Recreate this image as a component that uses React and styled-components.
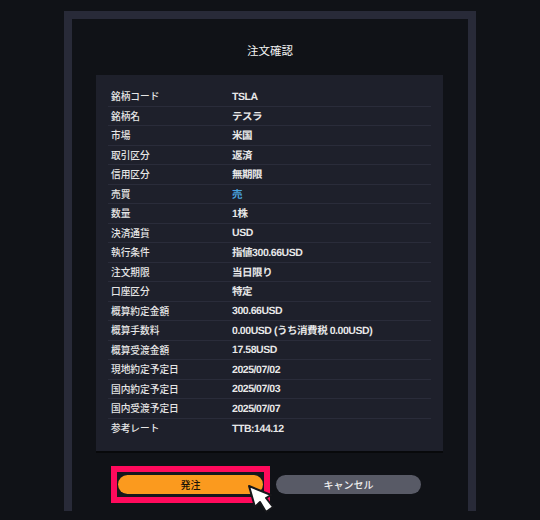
import styled, { createGlobalStyle } from "styled-components"

const rows = [
  ["銘柄コード", "TSLA"],
  ["銘柄名", "テスラ"],
  ["市場", "米国"],
  ["取引区分", "返済"],
  ["信用区分", "無期限"],
  ["売買", "売", true],
  ["数量", "1株"],
  ["決済通貨", "USD"],
  ["執行条件", "指値300.66USD"],
  ["注文期限", "当日限り"],
  ["口座区分", "特定"],
  ["概算約定金額", "300.66USD"],
  ["概算手数料", "0.00USD (うち消費税 0.00USD)"],
  ["概算受渡金額", "17.58USD"],
  ["現地約定予定日", "2025/07/02"],
  ["国内約定予定日", "2025/07/03"],
  ["国内受渡予定日", "2025/07/07"],
  ["参考レート", "TTB:144.12"],
]

const App = () => {
  return (
    <Page>
      <GlobalStyle />
      <Frame>
        <Title>注文確認</Title>
        <Card>
          {rows.map(([label, value, sell], i) => (
            <Row key={label} $last={i === rows.length - 1}>
              <Label>{label}</Label>
              <Value $sell={sell}>{value}</Value>
            </Row>
          ))}
        </Card>
        <Buttons>
          <Highlight>
            <OrderButton>発注</OrderButton>
          </Highlight>
          <CancelButton>キャンセル</CancelButton>
          <Cursor viewBox="0 0 30 32" aria-hidden="true">
            <path
              d="M2 2 L8 23 L13 18 L19 28 L26 23 L19 14 L24 11 Z"
              fill="#fff"
              stroke="#16171b"
              strokeWidth="2"
              strokeLinejoin="round"
            />
          </Cursor>
        </Buttons>
      </Frame>
    </Page>
  )
}

export default App

const GlobalStyle = createGlobalStyle`
  html, body {
    margin: 0;
    padding: 0;
    background: #101217;
  }
`

const Page = styled.div`
  width: 540px;
  height: 520px;
  overflow: hidden;
  padding-top: 11px;
  box-sizing: border-box;
  font-family: "Liberation Sans", "Noto Sans CJK JP", sans-serif;
`

const Frame = styled.div`
  width: 412px;
  height: 500px;
  margin-left: 64px;
  box-sizing: border-box;
  border: 8px solid #282a38;
  border-bottom: none;
  background: #101217;
  padding-top: 25px;
`

const Title = styled.h1`
  margin: 0 0 17px;
  font-size: 11.5px;
  line-height: 14px;
  font-weight: 400;
  text-align: center;
  color: #f2f2f2;
`

const Card = styled.div`
  width: 347px;
  margin-left: 24px;
  box-sizing: border-box;
  padding: 12px 12px 13px;
  background: #1e202b;
  box-shadow: 0 2px 0 #08090b;
`

const Row = styled.div`
  display: flex;
  align-items: center;
  height: 19.5px;
  box-sizing: border-box;
  border-bottom: ${(p) => (p.$last ? "none" : "1px solid #2a2c3a")};
`

const Label = styled.div`
  width: 124px;
  padding-left: 3px;
  box-sizing: border-box;
  font-size: 9.7px;
  font-weight: 500;
  color: #e6e6e6;
`

const Value = styled.div`
  padding-top: 1px;
  font-size: 10.5px;
  letter-spacing: -0.45px;
  font-weight: 700;
  text-rendering: geometricPrecision;
  color: ${(p) => (p.$sell ? "#4aa3df" : "#e8e8e8")};
`

const Buttons = styled.div`
  position: relative;
  display: flex;
  align-items: center;
  gap: 6px;
  margin: 15px 0 0 39px;
`

const Highlight = styled.div`
  display: flex;
  align-items: center;
  box-sizing: border-box;
  width: 159px;
  height: 37px;
  padding: 0 1px;
  border: 6px solid #ff0a5c;
  background: #16171c;
`

const Pill = styled.button`
  flex: none;
  width: 145px;
  height: 19px;
  padding: 2px 0 0;
  border: none;
  border-radius: 10px;
  font-family: inherit;
  font-size: 10px;
  line-height: 17px;
`

const OrderButton = styled(Pill)`
  background: #fb9a1e;
  color: #1a1408;
  font-weight: 500;
`

const CancelButton = styled(Pill)`
  background: #585a66;
  color: #eeeeee;
  font-weight: 500;
`

const Cursor = styled.svg`
  position: absolute;
  left: 136px;
  top: 18px;
  width: 30px;
  height: 32px;
`
